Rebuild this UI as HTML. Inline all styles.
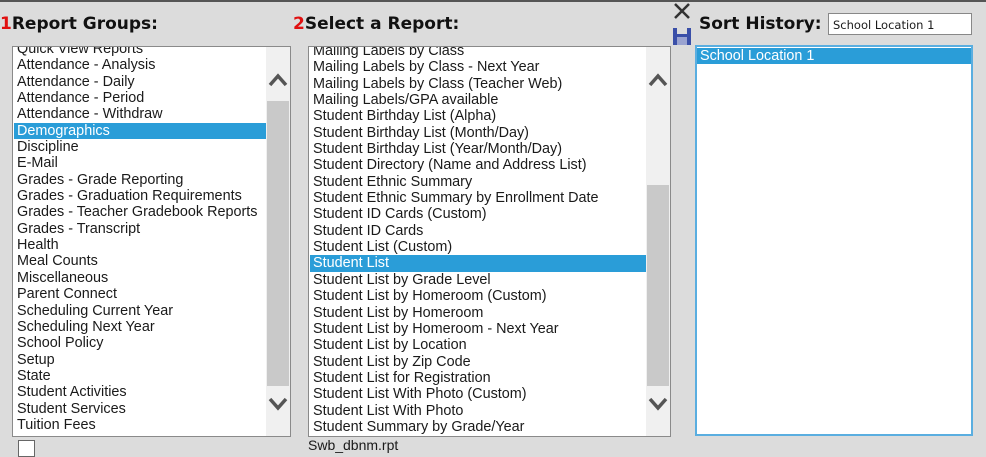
<!DOCTYPE html>
<html><head><meta charset="utf-8"><style>
*{margin:0;padding:0;box-sizing:border-box}
body{width:986px;height:450px;background:#dcdcdc;position:relative;overflow:hidden;font-family:"Liberation Sans",Arial,sans-serif;color:#1a1a1a}
.topline{position:absolute;left:0;top:0;width:986px;height:2px;background:#555}
.h{position:absolute;top:14px;font-weight:bold;font-size:17px;color:#111;white-space:nowrap;font-family:"DejaVu Sans",Verdana,sans-serif}
.h b{color:#e01010}
.box{position:absolute;background:#fff;border:1px solid #8a8a8a;overflow:hidden}
.list{position:absolute;left:4px;right:0;font-size:14.4px;line-height:16.35px;white-space:nowrap}
.list div{height:16.35px;padding-left:0}
.sel{background:#2a9dd8;color:#fff;margin-left:-3px;padding-left:3px!important}
.sb{position:absolute;top:0;bottom:0;width:24px;background:#f0f0f0}
.th{position:absolute;left:1px;right:1px;background:#c9c9c9}
.ar{position:absolute;left:2px;width:20px;height:14px}
</style></head><body>
<div class="topline"></div>
<div class="h" style="left:0"><b>1</b>Report Groups:</div>
<div class="h" style="left:293px"><b>2</b>Select a Report:</div>
<div class="h" style="left:699px">Sort History:</div>
<div style="position:absolute;left:828px;top:13px;width:144px;height:22px;background:#fff;border:1px solid #888;font-size:11.5px;padding:4px 0 0 4px;font-family:'DejaVu Sans',sans-serif">School Location 1</div>
<svg style="position:absolute;left:671px;top:2px" width="22" height="44" viewBox="0 0 22 44">
<path d="M4 2 L18 16 M18 2 L4 16" stroke="#333" stroke-width="2.5"/>
<rect x="2" y="26" width="18" height="17" fill="#3a4fa8"/>
<rect x="6" y="26" width="10" height="6" fill="#ddd"/>
<rect x="6" y="35" width="10" height="8" fill="#9aa3d0"/>
</svg>

<div class="box" style="left:12px;top:46px;width:279px;height:391px">
 <div class="list" style="top:-6px;right:24px">
  <div>Quick View Reports</div><div>Attendance - Analysis</div><div>Attendance - Daily</div><div>Attendance - Period</div><div>Attendance - Withdraw</div><div class="sel">Demographics</div><div>Discipline</div><div>E-Mail</div><div>Grades - Grade Reporting</div><div>Grades - Graduation Requirements</div><div>Grades - Teacher Gradebook Reports</div><div>Grades - Transcript</div><div>Health</div><div>Meal Counts</div><div>Miscellaneous</div><div>Parent Connect</div><div>Scheduling Current Year</div><div>Scheduling Next Year</div><div>School Policy</div><div>Setup</div><div>State</div><div>Student Activities</div><div>Student Services</div><div>Tuition Fees</div>
 </div>
 <div class="sb" style="right:0">
  <div class="th" style="top:54px;height:285px"></div>
  <svg class="ar" style="top:26px" viewBox="0 0 20 14"><path d="M2 12 L10 3 L18 12" stroke="#555" stroke-width="3.5" fill="none"/></svg>
  <svg class="ar" style="top:350px" viewBox="0 0 20 14"><path d="M2 2 L10 11 L18 2" stroke="#555" stroke-width="3.5" fill="none"/></svg>
 </div>
</div>

<div class="box" style="left:308px;top:46px;width:363px;height:391px">
 <div class="list" style="top:-4px;right:24px">
  <div>Mailing Labels by Class</div><div>Mailing Labels by Class - Next Year</div><div>Mailing Labels by Class (Teacher Web)</div><div>Mailing Labels/GPA available</div><div>Student Birthday List (Alpha)</div><div>Student Birthday List (Month/Day)</div><div>Student Birthday List (Year/Month/Day)</div><div>Student Directory (Name and Address List)</div><div>Student Ethnic Summary</div><div>Student Ethnic Summary by Enrollment Date</div><div>Student ID Cards (Custom)</div><div>Student ID Cards</div><div>Student List (Custom)</div><div class="sel">Student List</div><div>Student List by Grade Level</div><div>Student List by Homeroom (Custom)</div><div>Student List by Homeroom</div><div>Student List by Homeroom - Next Year</div><div>Student List by Location</div><div>Student List by Zip Code</div><div>Student List for Registration</div><div>Student List With Photo (Custom)</div><div>Student List With Photo</div><div>Student Summary by Grade/Year</div>
 </div>
 <div class="sb" style="right:0">
  <div class="th" style="top:138px;height:201px"></div>
  <svg class="ar" style="top:26px" viewBox="0 0 20 14"><path d="M2 12 L10 3 L18 12" stroke="#555" stroke-width="3.5" fill="none"/></svg>
  <svg class="ar" style="top:350px" viewBox="0 0 20 14"><path d="M2 2 L10 11 L18 2" stroke="#555" stroke-width="3.5" fill="none"/></svg>
 </div>
</div>

<div class="box" style="left:695px;top:45px;width:278px;height:391px;border:2px solid #5aaee0">
 <div class="list" style="top:1px;left:0;font-size:14.4px"><div class="sel" style="margin-left:0;padding-left:3px">School Location 1</div></div>
</div>

<div style="position:absolute;left:18px;top:440px;width:17px;height:17px;background:#fff;border:1px solid #666"></div>
<div style="position:absolute;left:308px;top:437px;font-size:14px">Swb_dbnm.rpt</div>
</body></html>
